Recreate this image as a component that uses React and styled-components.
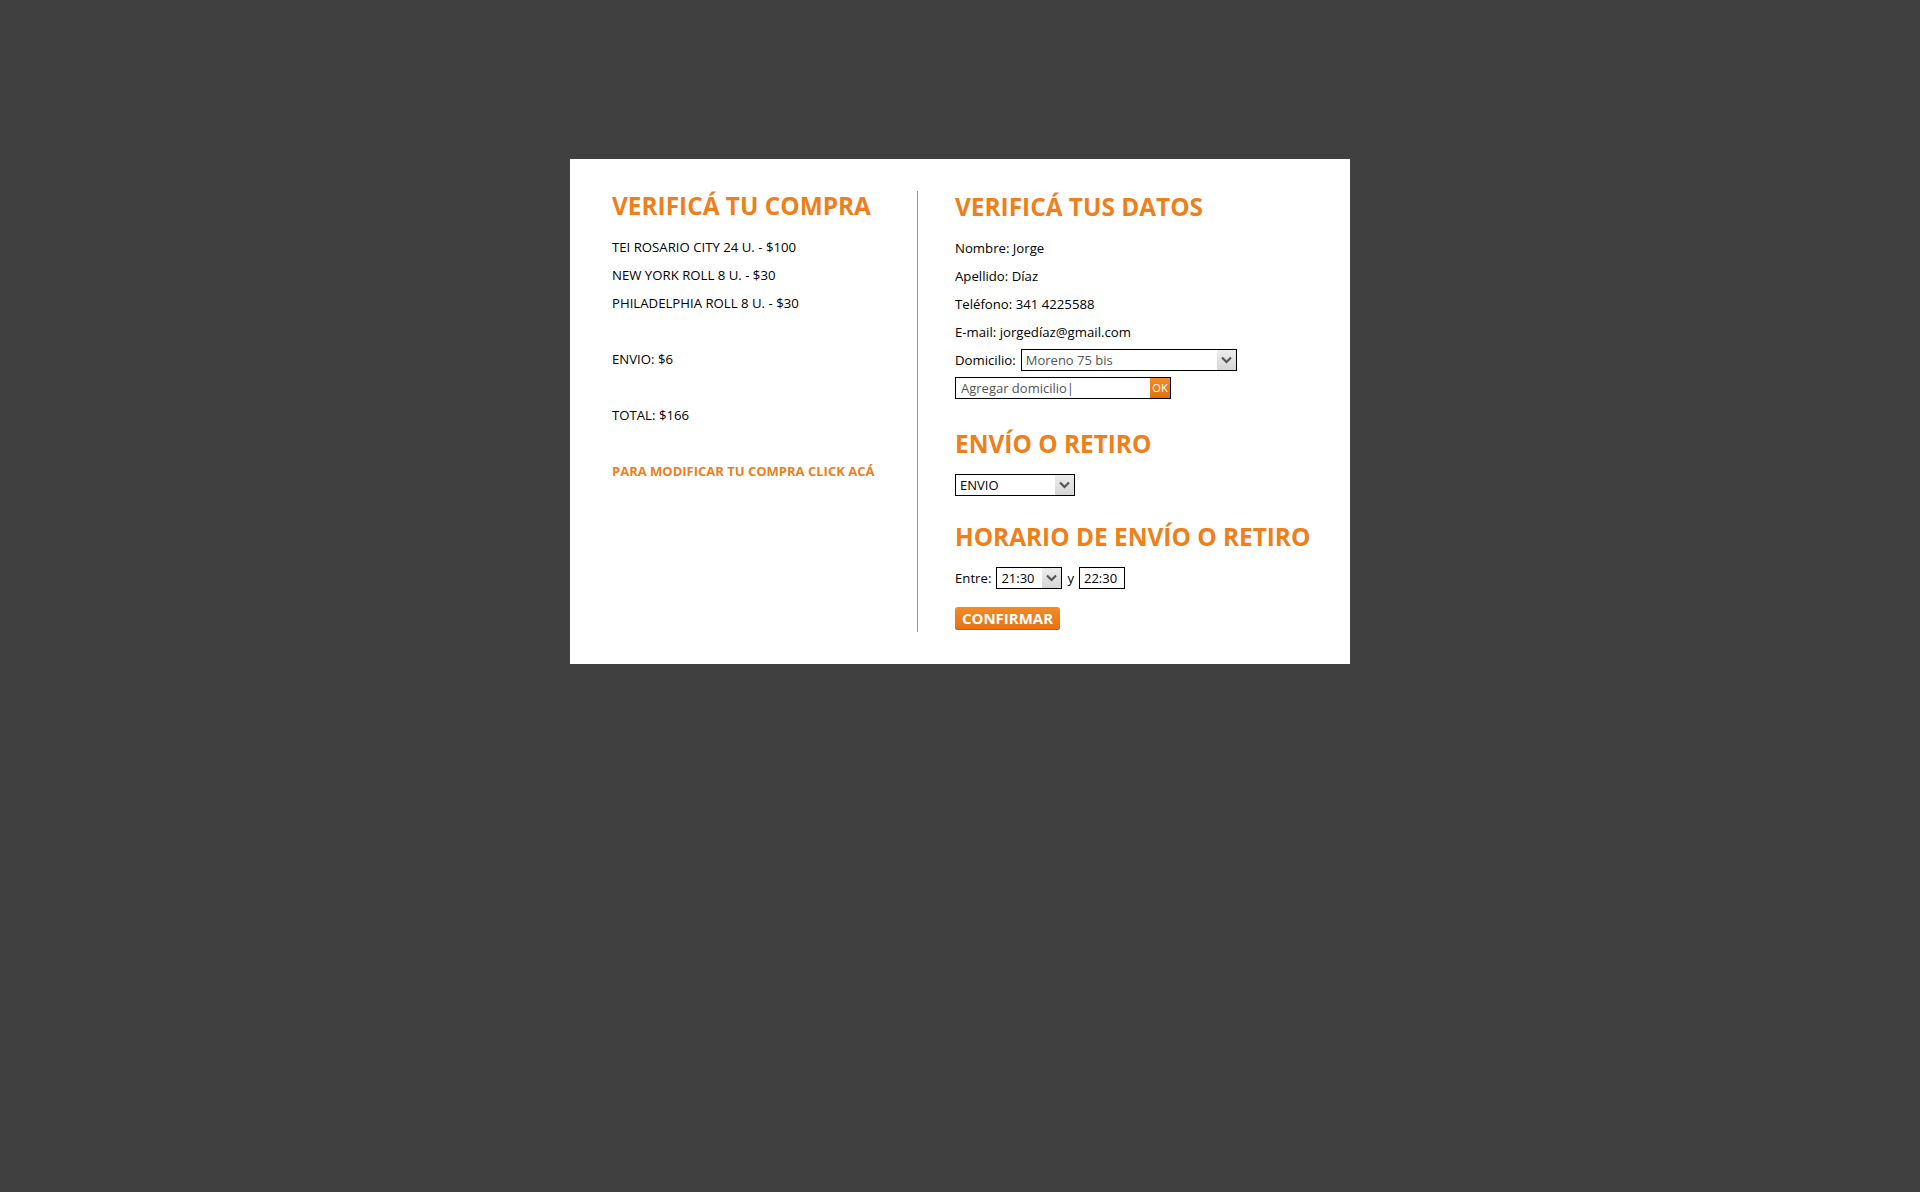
import React from 'react';
import styled, { createGlobalStyle } from 'styled-components';

const orange = '#ee7f1b';

const GlobalStyle = createGlobalStyle`
  html, body {
    margin: 0;
    padding: 0;
    background: #404040;
    font-family: "Open Sans", "Liberation Sans", sans-serif;
  }
  #root {
    min-height: 1192px;
  }
`

const Page = styled.div`
  display: flex;
  justify-content: center;
  padding-top: 159px;
`

const Card = styled.div`
  width: 780px;
  box-sizing: border-box;
  background: #fff;
  display: flex;
  align-items: flex-start;
  padding: 32px 0 32px 42px;
`

const LeftCol = styled.div`
  width: 305px;
  flex-shrink: 0;
`

const RightCol = styled.div`
  flex: 1;
  border-left: 1px solid ${orange};
  padding: 1px 0 2px 37px;
`

const Heading = styled.h2`
  margin: ${p => p.$top || 0}px 0 12px;
  font-size: 24.4px;
  line-height: 30px;
  font-weight: 700;
  color: ${orange};
`

const Line = styled.div`
  height: 28px;
  line-height: 28px;
  font-size: 13.2px;
  color: #000;
  display: flex;
  align-items: center;
  gap: 5px;
  margin-bottom: ${p => p.$after ? 28 : 0}px;
`

const EditLink = styled.a`
  display: block;
  height: 28px;
  line-height: 28px;
  font-size: 13px;
  font-weight: 700;
  color: ${orange};
  text-decoration: none;
`

const Box = styled.div`
  box-sizing: border-box;
  width: ${p => p.$w}px;
  height: 22px;
  border: 1px solid #000;
  display: flex;
  align-items: center;
  background: #fff;
  font-size: 13px;
  color: ${p => p.$muted ? '#555' : '#000'};
`

const BoxText = styled.span`
  flex: 1;
  padding-left: ${p => p.$pad || 4}px;
  white-space: nowrap;
  overflow: hidden;
  line-height: 20px;
`

const Arrow = styled.span`
  width: 19px;
  height: 20px;
  background: linear-gradient(#ececec, #d6d6d6);
  display: flex;
  align-items: center;
  justify-content: center;
`

const OkButton = styled.span`
  width: 20px;
  height: 20px;
  background: linear-gradient(#f48a2a, #e0700f);
  color: #fff;
  font-size: 11px;
  line-height: 20px;
  text-align: center;
`

const Confirm = styled.button`
  margin-top: 15px;
  width: 105px;
  height: 23px;
  border: none;
  border-radius: 3px;
  padding: 0;
  background: linear-gradient(#f38a29, #e5730f);
  box-shadow: inset 0 -1px 0 #c9620c;
  color: #fff;
  font-family: "Open Sans", "Liberation Sans", sans-serif;
  font-size: 15px;
  font-weight: 700;
  line-height: 23px;
  display: block;
`

const Chevron = () => (
  <svg width="11" height="8" viewBox="0 0 11 8">
    <path d="M1 1.5 L5.5 6 L10 1.5" fill="none" stroke="#555" strokeWidth="2.2" />
  </svg>
);

const Select = ({ w, value, muted }) => (
  <Box $w={w} $muted={muted}>
    <BoxText>{value}</BoxText>
    <Arrow><Chevron /></Arrow>
  </Box>
);

const items = [
  'TEI ROSARIO CITY 24 U. - $100',
  'NEW YORK ROLL 8 U. - $30',
  'PHILADELPHIA ROLL 8 U. - $30',
];

export default function App() {
  return (
    <>
      <GlobalStyle />
      <Page>
        <Card>
          <LeftCol>
            <Heading>VERIFICÁ TU COMPRA</Heading>
            {items.map((it, i) => (
              <Line key={it} $after={i === items.length - 1}>{it}</Line>
            ))}
            <Line $after>ENVIO: $6</Line>
            <Line $after>TOTAL: $166</Line>
            <EditLink href="#">PARA MODIFICAR TU COMPRA CLICK ACÁ</EditLink>
          </LeftCol>
          <RightCol>
            <Heading>VERIFICÁ TUS DATOS</Heading>
            <Line>Nombre: Jorge</Line>
            <Line>Apellido: Díaz</Line>
            <Line>Teléfono: 341 4225588</Line>
            <Line>E-mail: jorgedíaz@gmail.com</Line>
            <Line>
              Domicilio:
              <Select w={216} value="Moreno 75 bis" muted />
            </Line>
            <Line>
              <Box $w={216} $muted>
                <BoxText $pad={5}>Agregar domicilio|</BoxText>
                <OkButton>OK</OkButton>
              </Box>
            </Line>

            <Heading $top={27}>ENVÍO O RETIRO</Heading>
            <Line>
              <Select w={120} value="ENVIO" />
            </Line>

            <Heading $top={23}>HORARIO DE ENVÍO O RETIRO</Heading>
            <Line>
              Entre:
              <Select w={66} value="21:30" />
              y
              <Box $w={46}>
                <BoxText>22:30</BoxText>
              </Box>
            </Line>
            <Confirm>CONFIRMAR</Confirm>
          </RightCol>
        </Card>
      </Page>
    </>
  );
}
